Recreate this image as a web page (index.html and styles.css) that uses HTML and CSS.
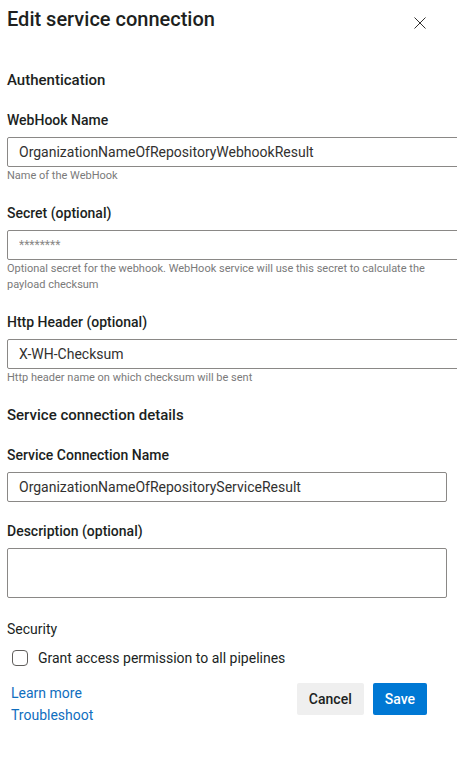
FILE: index.html
```html
<!DOCTYPE html>
<html lang="en">
<head>
    <meta charset="utf-8">
    <title>Edit service connection</title>
    <link rel="stylesheet" href="styles.css">
</head>
<body>
<div class="panel">
    <div class="panel-head">
        <h1 class="title">Edit service connection</h1>
        <button class="close" type="button" aria-label="Close">
            <svg width="12" height="12" viewBox="0 0 12 12"><path d="M0.5 0.5L11.5 11.5M11.5 0.5L0.5 11.5" stroke="#323130" stroke-width="1"/></svg>
        </button>
    </div>

    <h2 class="section first">Authentication</h2>

    <div class="field wide">
        <label class="label">WebHook Name</label>
        <input class="text-input" type="text" value="OrganizationNameOfRepositoryWebhookResult">
        <div class="hint">Name of the WebHook</div>
    </div>

    <div class="field wide">
        <label class="label">Secret (optional)</label>
        <input class="text-input secret" type="text" value="********">
        <div class="hint">Optional secret for the webhook. WebHook service will use this secret to calculate the payload checksum</div>
    </div>

    <div class="field wide">
        <label class="label">Http Header (optional)</label>
        <input class="text-input" type="text" value="X-WH-Checksum">
        <div class="hint">Http header name on which checksum will be sent</div>
    </div>

    <h2 class="section">Service connection details</h2>

    <div class="field">
        <label class="label">Service Connection Name</label>
        <input class="text-input" type="text" value="OrganizationNameOfRepositoryServiceResult">
    </div>

    <div class="field">
        <label class="label">Description (optional)</label>
        <textarea class="text-area"></textarea>
    </div>

    <div class="security">Security</div>
    <label class="check-row">
        <span class="checkbox"></span>
        <span>Grant access permission to all pipelines</span>
    </label>

    <div class="footer">
        <div class="links">
            <a href="#">Learn more</a>
            <a href="#">Troubleshoot</a>
        </div>
        <div class="buttons">
            <button class="btn" type="button">Cancel</button>
            <button class="btn primary" type="button">Save</button>
        </div>
    </div>
</div>
</body>
</html>
```

FILE: styles.css
```css
*{margin:0;padding:0;box-sizing:border-box;}
body{font-family:Roboto,"Open Sans",sans-serif;font-size:14px;color:#201f1e;background:#fff;overflow:hidden;}
.panel{padding:5px 0 0 7px;width:457px;}
.panel-head{display:flex;justify-content:space-between;align-items:center;height:28px;}
.title{font-size:20px;font-weight:500;line-height:28px;}
.close{background:none;border:0;width:12px;height:12px;margin:7px 31px 0 0;display:flex;}
.section{font-size:15px;font-weight:500;line-height:20px;margin-top:19px;}
.section.first{margin-top:37px;}
.section + .field{margin-top:20px;}
.field{margin-top:19px;width:440px;}
.field.wide{width:470px;}
.label{display:block;font-weight:500;line-height:20px;margin-bottom:7px;}
.text-input{display:block;width:100%;height:30px;border:1px solid #8a8886;border-radius:2px;padding:0 11px;font:inherit;color:#323130;}
.text-input.secret{color:#8a8886;font-size:12px;}
.text-area{display:block;width:100%;height:50px;border:1px solid #8a8886;border-radius:2px;resize:none;font:inherit;}
.hint{font-size:11px;line-height:16px;color:#7a7a7a;margin-top:1px;width:440px;}
.field + .field{margin-top:19px;}
.security{margin-top:21px;line-height:20px;}
.check-row{display:flex;align-items:center;gap:10px;margin-top:9px;padding-left:5px;line-height:20px;}
.checkbox{width:16px;height:16px;border:1px solid #605e5c;border-radius:4px;}
.footer{display:flex;justify-content:space-between;margin-top:14px;width:420px;}
.links{display:flex;flex-direction:column;padding-left:4px;}
.links a{color:#106ebe;text-decoration:none;line-height:22px;}
.buttons{display:flex;gap:9px;padding-top:1px;}
.btn{height:32px;padding:0 12px;border:0;border-radius:2px;background:#efefef;font:inherit;font-weight:500;color:#201f1e;}
.btn.primary{background:#0078d4;color:#fff;}
```
